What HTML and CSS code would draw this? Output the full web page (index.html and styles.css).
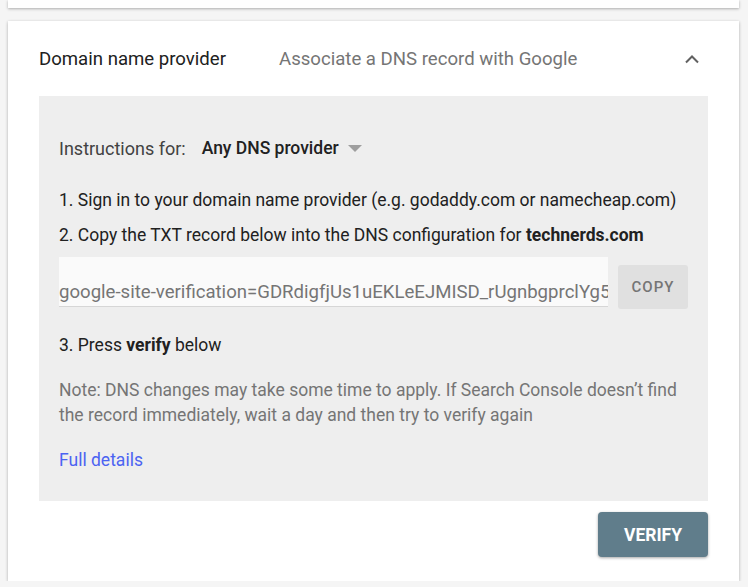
FILE: index.html
```
<!DOCTYPE html>
<html lang="en">
<head>
    <meta charset="UTF-8">
    <title>Verify ownership</title>
    <link rel="stylesheet" href="styles.css">
</head>
<body>
    <div class="card card-prev"></div>

    <div class="card method">
        <div class="method-header">
            <span class="method-title">Domain name provider</span>
            <span class="method-desc">Associate a DNS record with Google</span>
            <svg class="chevron" width="16" height="10" viewBox="0 0 16 10">
                <path d="M2 8.5 L8 2.5 L14 8.5" fill="none" stroke="#616161" stroke-width="2"/>
            </svg>
        </div>

        <div class="panel">
            <div class="instructions">
                <span class="instr-label">Instructions for:</span>
                <span class="instr-select">Any DNS provider</span>
                <span class="triangle"></span>
            </div>

            <p class="step step-first">1. Sign in to your domain name provider (e.g. godaddy.com or namecheap.com)</p>
            <p class="step">2. Copy the TXT record below into the DNS configuration for <b>technerds.com</b></p>

            <div class="record-row">
                <input class="record-input" type="text" readonly value="google-site-verification=GDRdigfjUs1uEKLeEJMISD_rUgnbgprclYg5Hk9vXoQ">
                <button class="copy-btn">COPY</button>
            </div>

            <p class="step step-three">3. Press <b>verify</b> below</p>

            <p class="note">Note: DNS changes may take some time to apply. If Search Console doesn’t find the record immediately, wait a day and then try to verify again</p>

            <a class="details-link" href="#">Full details</a>
        </div>

        <div class="actions">
            <button class="verify-btn">VERIFY</button>
        </div>
    </div>
</body>
</html>
```

FILE: styles.css
```
body {
    margin: 0;
    background-color: #f5f5f5;
    font-family: Roboto, "Liberation Sans", sans-serif;
    color: #212121;
}
.card {
    background-color: #fff;
    margin: 0 9px 0 8px;
    box-shadow: 0 1px 3px rgba(0, 0, 0, 0.3);
}
.card-prev {
    height: 8px;
}
.method {
    margin-top: 13px;
    padding: 0 31px 24px 31px;
}
.method-header {
    display: flex;
    align-items: center;
    height: 75px;
    font-size: 18.6px;
}
.method-title {
    width: 240px;
    color: #212121;
}
.method-desc {
    flex: 1;
    color: #757575;
}
.chevron {
    margin-right: 8px;
}
.panel {
    background-color: #eeeeee;
    padding: 40px 20px 28px 20px;
    font-size: 17.5px;
    line-height: 25px;
}
.instructions {
    display: flex;
    align-items: center;
}
.instr-label {
    color: #424242;
    font-size: 18px;
    margin-right: 16px;
}
.instr-select {
    font-weight: 500;
    color: #212121;
}
.triangle {
    width: 0;
    height: 0;
    margin-left: 9px;
    border-left: 7px solid transparent;
    border-right: 7px solid transparent;
    border-top: 7px solid #9e9e9e;
}
.step {
    margin: 0;
    color: #212121;
}
.step-first {
    margin-top: 27px;
    margin-bottom: 10px;
}
.step b {
    font-weight: 700;
}
.record-row {
    display: flex;
    align-items: flex-end;
    margin-top: 9px;
}
.record-input {
    width: 549px;
    height: 50px;
    box-sizing: border-box;
    border: none;
    border-bottom: 1px solid #d6d6d6;
    background-color: #fafafa;
    padding: 20px 0 0 0;
    font-family: inherit;
    font-size: 18.6px;
    color: #757575;
    outline: none;
}
.copy-btn {
    width: 70px;
    height: 44px;
    margin-left: 10px;
    margin-bottom: -2px;
    border: none;
    border-radius: 3px;
    background-color: #e0e0e0;
    color: #757575;
    font-family: inherit;
    font-size: 15px;
    font-weight: 500;
    letter-spacing: 1px;
    padding: 0;
}
.step-three {
    margin-top: 26px;
}
.note {
    margin: 20px 0 0 0;
    color: #757575;
}
.details-link {
    display: inline-block;
    margin-top: 20px;
    color: #4b63f2;
    text-decoration: none;
}
.actions {
    display: flex;
    justify-content: flex-end;
    margin-top: 11px;
}
.verify-btn {
    width: 110px;
    height: 45px;
    border: none;
    border-radius: 4px;
    background-color: #607d8b;
    color: #fff;
    font-family: inherit;
    font-size: 17.5px;
    font-weight: 700;
    box-shadow: 0 1px 3px rgba(0, 0, 0, 0.35);
}
```
